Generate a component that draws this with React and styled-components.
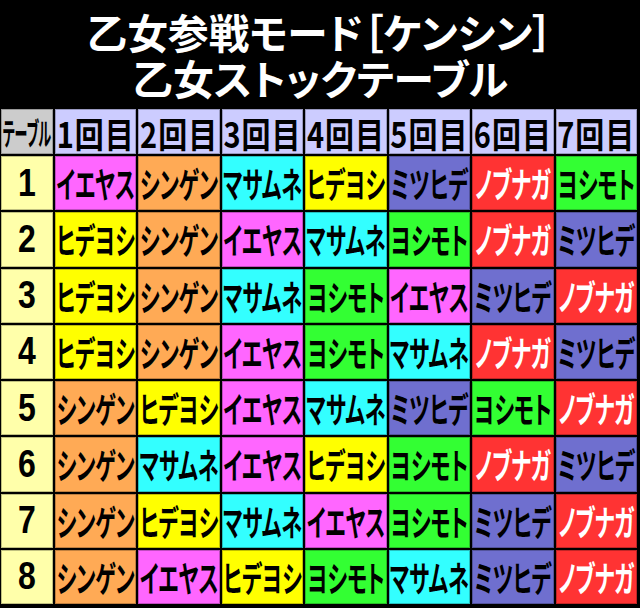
import React from 'react'
import styled, { createGlobalStyle } from 'styled-components'

const GlobalStyle = createGlobalStyle`
  html, body {
    margin: 0;
    padding: 0;
    background: #000;
  }
  body {
    font-family: 'Noto Sans CJK JP', 'Noto Sans', sans-serif;
  }
`

const COLORS = {
  イエヤス: '#ff66ff',
  シンゲン: '#ffaa55',
  マサムネ: '#33ffff',
  ヒデヨシ: '#ffff00',
  ミツヒデ: '#6f6fcf',
  ノブナガ: '#ff3333',
  ヨシモト: '#33ff33',
}

const ROWS = [
  ['イエヤス', 'シンゲン', 'マサムネ', 'ヒデヨシ', 'ミツヒデ', 'ノブナガ', 'ヨシモト'],
  ['ヒデヨシ', 'シンゲン', 'イエヤス', 'マサムネ', 'ヨシモト', 'ノブナガ', 'ミツヒデ'],
  ['ヒデヨシ', 'シンゲン', 'マサムネ', 'ヨシモト', 'イエヤス', 'ミツヒデ', 'ノブナガ'],
  ['ヒデヨシ', 'シンゲン', 'イエヤス', 'ヨシモト', 'マサムネ', 'ノブナガ', 'ミツヒデ'],
  ['シンゲン', 'ヒデヨシ', 'イエヤス', 'マサムネ', 'ミツヒデ', 'ヨシモト', 'ノブナガ'],
  ['シンゲン', 'マサムネ', 'イエヤス', 'ヒデヨシ', 'ヨシモト', 'ノブナガ', 'ミツヒデ'],
  ['シンゲン', 'ヒデヨシ', 'マサムネ', 'イエヤス', 'ヨシモト', 'ミツヒデ', 'ノブナガ'],
  ['シンゲン', 'イエヤス', 'ヒデヨシ', 'ヨシモト', 'マサムネ', 'ミツヒデ', 'ノブナガ'],
]

const App = () => {
  return (
    <Page>
      <GlobalStyle />
      <Title>
        <TitleLine>乙女参戦モード［ケンシン］</TitleLine>
        <TitleLine>乙女ストックテーブル</TitleLine>
      </Title>
      <Table>
        <CornerCell>
          <Stretch $sy={2.4}>テーブル</Stretch>
        </CornerCell>
        {[1, 2, 3, 4, 5, 6, 7].map((n) => (
          <HeadCell key={n}>
            <Stretch $sy={1.22}>{n}回目</Stretch>
          </HeadCell>
        ))}
        {ROWS.map((row, i) => (
          <React.Fragment key={i}>
            <NumCell>
              <Stretch $sy={1.2}>{i + 1}</Stretch>
            </NumCell>
            {row.map((name, j) => (
              <NameCell key={j} $bg={COLORS[name]} $light={name === 'ノブナガ'}>
                <Stretch $sy={1.7}>{name}</Stretch>
              </NameCell>
            ))}
          </React.Fragment>
        ))}
      </Table>
    </Page>
  )
}

const Page = styled.div`
  width: 640px;
  height: 608px;
  background: #000;
  overflow: hidden;
`

const Title = styled.div`
  height: 109px;
  box-sizing: border-box;
  padding-top: 8px;
  display: flex;
  flex-direction: column;
  align-items: center;
`

const TitleLine = styled.div`
  height: 46px;
  display: flex;
  align-items: center;
  color: #fff;
  font-size: 31px;
  font-weight: 700;
  line-height: 1;
  font-feature-settings: 'palt';
  white-space: nowrap;
  transform: scale(1.31);
`

const Table = styled.div`
  display: grid;
  grid-template-columns: 52px repeat(7, 1fr);
  grid-template-rows: 45px repeat(8, 54.25px);
  gap: 2px;
  padding: 0 3px 0 1px;
`

const Cell = styled.div`
  display: flex;
  align-items: center;
  justify-content: center;
  box-shadow: inset 0 0 0 1px rgba(0, 0, 0, 0.25);
  color: #000;
  white-space: nowrap;
`

// text is drawn condensed: a small font stretched upward
const Stretch = styled.span`
  display: inline-block;
  transform: scaleY(${(p) => p.$sy});
  font-feature-settings: 'palt';
`

const CornerCell = styled(Cell)`
  background: #cccccc;
  font-size: 13px;
  font-weight: 700;
`

const HeadCell = styled(Cell)`
  background: #ccccff;
  font-size: 29px;
  font-weight: 700;
  letter-spacing: 1px;
`

const NumCell = styled(Cell)`
  background: #ffffaa;
  font-family: 'Liberation Sans', 'Noto Sans', sans-serif;
  font-size: 32px;
  font-weight: 700;
`

const NameCell = styled(Cell)`
  background: ${(p) => p.$bg};
  color: ${(p) => (p.$light ? '#fff' : '#000')};
  font-size: 21px;
  font-weight: 700;
`

export default App
